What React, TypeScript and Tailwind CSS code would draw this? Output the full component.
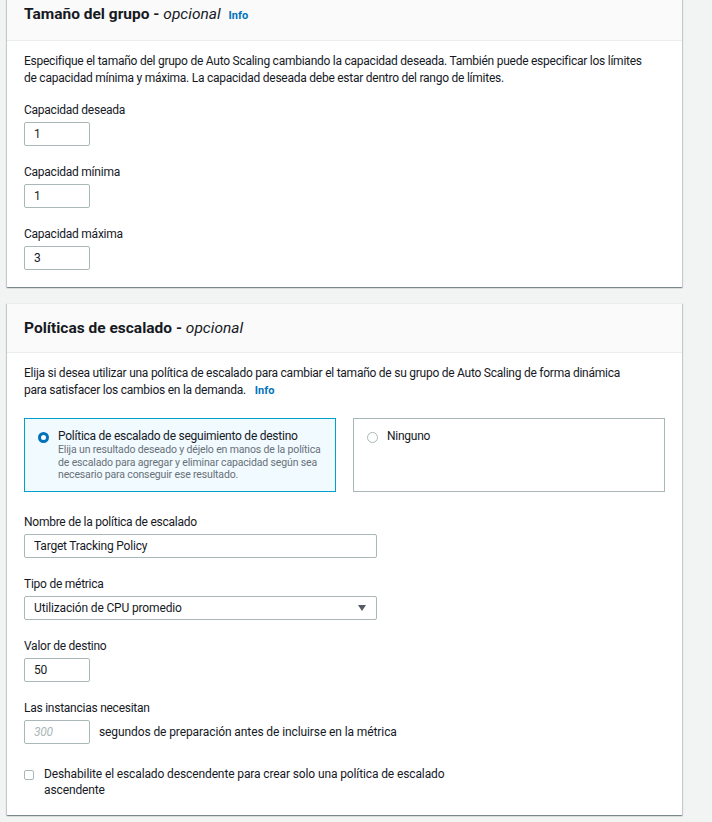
import type { ReactNode } from 'react';

const Info = ({ className = '' }: { className?: string }) => (
  <a href="#" className={`text-[11px] font-bold tracking-normal text-[#0073bb] ${className}`}>
    Info
  </a>
);

const Card = ({ title, info, first, children }: { title: string; info?: boolean; first?: boolean; children: ReactNode }) => (
  <section
    className={`bg-white border-t border-[#eaeded] shadow-[0_1px_1px_0_rgba(0,28,36,0.3),1px_1px_1px_0_rgba(0,28,36,0.15),-1px_1px_1px_0_rgba(0,28,36,0.15)] ${first ? '-mt-[11px]' : 'mt-[16px]'}`}
  >
    <header className="bg-[#fafafa] border-b border-[#eaeded] px-[17px] py-[14px]">
      <h2 className="text-[15.5px] leading-[20px] font-bold tracking-normal text-[#16191f]">
        {title} - <i className="font-normal">opcional</i>
        {info && <Info className="ml-[8px]" />}
      </h2>
    </header>
    <div className="px-[17px] pt-[12px] pb-[17px]">{children}</div>
  </section>
);

const Field = ({ label, children, className = '' }: { label: string; children: ReactNode; className?: string }) => (
  <div className={className}>
    <div className="leading-[16px] mb-[4px]">{label}</div>
    {children}
  </div>
);

const TextBox = ({ value, width = 'w-[66px]' }: { value: string; width?: string }) => (
  <input
    readOnly
    defaultValue={value}
    className={`${width} h-[24px] border border-[#aab7b8] rounded-[2px] px-[9px] text-[12px] tracking-[-0.2px] text-[#16191f] bg-white outline-none`}
  />
);

const Radio = ({ checked }: { checked?: boolean }) =>
  checked ? (
    <span className="mt-[4px] w-[11px] h-[11px] shrink-0 rounded-full border-[3px] border-[#0073bb] bg-white" />
  ) : (
    <span className="mt-[4px] w-[11px] h-[11px] shrink-0 rounded-full border border-[#aab7b8] bg-white" />
  );

export default function App() {
  return (
    <div className="h-[822px] overflow-hidden flex flex-col bg-[#f2f3f3] pl-[7px] pr-[30px] font-['Roboto','Liberation_Sans',sans-serif] text-[12px] tracking-[-0.25px] text-[#16191f]">
      <Card title="Tamaño del grupo" info first>
        <p className="leading-[17px]">
          Especifique el tamaño del grupo de Auto Scaling cambiando la capacidad deseada. También puede especificar los límites
          <br />
          de capacidad mínima y máxima. La capacidad deseada debe estar dentro del rango de límites.
        </p>
        <div className="mt-[15px] flex flex-col gap-[18px]">
          <Field label="Capacidad deseada">
            <TextBox value="1" />
          </Field>
          <Field label="Capacidad mínima">
            <TextBox value="1" />
          </Field>
          <Field label="Capacidad máxima">
            <TextBox value="3" />
          </Field>
        </div>
      </Card>

      <Card title="Políticas de escalado">
        <p className="leading-[17px]">
          Elija si desea utilizar una política de escalado para cambiar el tamaño de su grupo de Auto Scaling de forma dinámica
          <br />
          para satisfacer los cambios en la demanda.
          <Info className="ml-[9px]" />
        </p>

        <div className="mt-[19px] grid grid-cols-2 gap-[17px]">
          <label className="h-[74px] flex gap-[9px] border border-[#00a1c9] bg-[#f1faff] pl-[13px] pt-[9px]">
            <Radio checked />
            <div>
              <div className="leading-[16px]">Política de escalado de seguimiento de destino</div>
              <div className="whitespace-nowrap text-[10.5px] leading-[12.5px] tracking-[-0.15px] text-[#687078]">
                Elija un resultado deseado y déjelo en manos de la política
                <br />
                de escalado para agregar y eliminar capacidad según sea
                <br />
                necesario para conseguir ese resultado.
              </div>
            </div>
          </label>
          <label className="h-[74px] flex gap-[9px] border border-[#aab7b8] bg-white pl-[13px] pt-[9px]">
            <Radio />
            <div className="leading-[16px]">Ninguno</div>
          </label>
        </div>

        <div className="mt-[22px] flex flex-col gap-[18px]">
          <Field label="Nombre de la política de escalado">
            <TextBox value="Target Tracking Policy" width="w-[353px]" />
          </Field>
          <Field label="Tipo de métrica">
            <div className="w-[353px] h-[24px] border border-[#aab7b8] rounded-[2px] pl-[9px] pr-[10px] flex items-center justify-between bg-white">
              <span className="tracking-[-0.15px]">Utilización de CPU promedio</span>
              <svg width="8" height="6" viewBox="0 0 8 6">
                <path d="M0 0H8L4 6Z" fill="#545b64" />
              </svg>
            </div>
          </Field>
          <Field label="Valor de destino">
            <TextBox value="50" />
          </Field>
          <Field label="Las instancias necesitan">
            <div className="flex items-center gap-[9px]">
              <input
                readOnly
                placeholder="300"
                className="w-[66px] h-[24px] border border-[#aab7b8] rounded-[2px] px-[9px] text-[12px] bg-white outline-none placeholder:italic placeholder:text-[#aab7b8]"
              />
              <span className="tracking-[-0.1px]">segundos de preparación antes de incluirse en la métrica</span>
            </div>
          </Field>
        </div>

        <label className="mt-[22px] flex gap-[10px] leading-[16px]">
          <span className="mt-[4px] w-[10px] h-[10px] shrink-0 rounded-[2px] border border-[#aab7b8] bg-white" />
          <span className="tracking-[-0.12px]">
            Deshabilite el escalado descendente para crear solo una política de escalado
            <br />
            ascendente
          </span>
        </label>
      </Card>
    </div>
  );
}
